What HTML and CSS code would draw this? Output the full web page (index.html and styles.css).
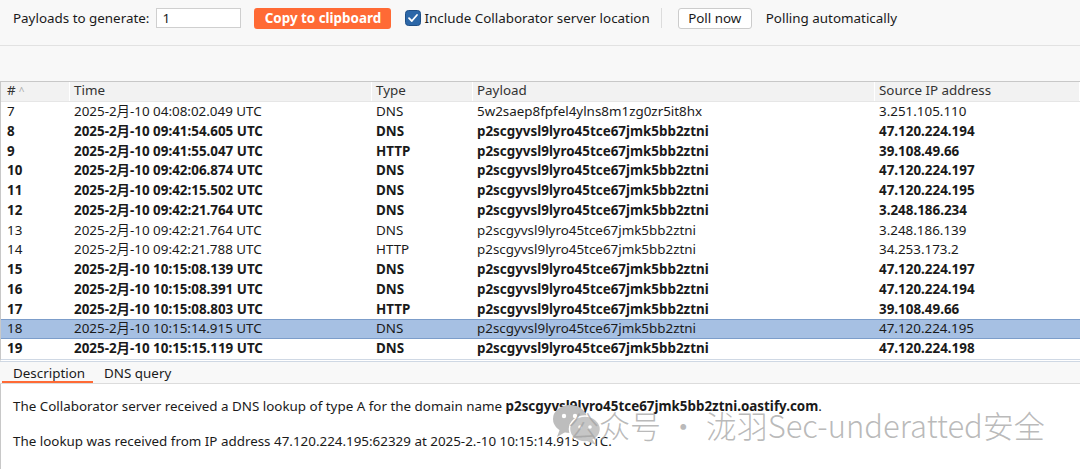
FILE: index.html
```html
<!DOCTYPE html>
<html>
<head>
<meta charset="utf-8">
<link rel="stylesheet" href="styles.css">
</head>
<body>
<div class="app">
  <div class="toolbar">
    <span class="label">Payloads to generate:</span>
    <span class="input">1</span>
    <span class="btn-primary">Copy to clipboard</span>
    <span class="check"><svg width="16" height="16" viewBox="0 0 16 16"><rect x="0.5" y="0.5" width="15" height="15" rx="3" fill="#2c67a8" stroke="#1f4f86"/><path d="M4 8.2 L6.8 11 L12 5" fill="none" stroke="#fff" stroke-width="1.8" stroke-linecap="round" stroke-linejoin="round"/></svg></span>
    <span class="check-label">Include Collaborator server location</span>
    <span class="sep"></span>
    <span class="btn">Poll now</span>
    <span class="status">Polling automatically</span>
  </div>
  <div class="spacer"></div>
  <div class="table">
    <div class="row head">
      <div class="c c1">#<span class="sort">^</span></div>
      <div class="c c2">Time</div>
      <div class="c c3">Type</div>
      <div class="c c4">Payload</div>
      <div class="c c5">Source IP address</div>
    </div>
    <div class="row"><div class="c c1">7</div><div class="c c2">2025-2月-10 04:08:02.049 UTC</div><div class="c c3">DNS</div><div class="c c4">5w2saep8fpfel4ylns8m1zg0zr5it8hx</div><div class="c c5">3.251.105.110</div></div>
    <div class="row b"><div class="c c1">8</div><div class="c c2">2025-2月-10 09:41:54.605 UTC</div><div class="c c3">DNS</div><div class="c c4">p2scgyvsl9lyro45tce67jmk5bb2ztni</div><div class="c c5">47.120.224.194</div></div>
    <div class="row b"><div class="c c1">9</div><div class="c c2">2025-2月-10 09:41:55.047 UTC</div><div class="c c3">HTTP</div><div class="c c4">p2scgyvsl9lyro45tce67jmk5bb2ztni</div><div class="c c5">39.108.49.66</div></div>
    <div class="row b"><div class="c c1">10</div><div class="c c2">2025-2月-10 09:42:06.874 UTC</div><div class="c c3">DNS</div><div class="c c4">p2scgyvsl9lyro45tce67jmk5bb2ztni</div><div class="c c5">47.120.224.197</div></div>
    <div class="row b"><div class="c c1">11</div><div class="c c2">2025-2月-10 09:42:15.502 UTC</div><div class="c c3">DNS</div><div class="c c4">p2scgyvsl9lyro45tce67jmk5bb2ztni</div><div class="c c5">47.120.224.195</div></div>
    <div class="row b"><div class="c c1">12</div><div class="c c2">2025-2月-10 09:42:21.764 UTC</div><div class="c c3">DNS</div><div class="c c4">p2scgyvsl9lyro45tce67jmk5bb2ztni</div><div class="c c5">3.248.186.234</div></div>
    <div class="row"><div class="c c1">13</div><div class="c c2">2025-2月-10 09:42:21.764 UTC</div><div class="c c3">DNS</div><div class="c c4">p2scgyvsl9lyro45tce67jmk5bb2ztni</div><div class="c c5">3.248.186.139</div></div>
    <div class="row"><div class="c c1">14</div><div class="c c2">2025-2月-10 09:42:21.788 UTC</div><div class="c c3">HTTP</div><div class="c c4">p2scgyvsl9lyro45tce67jmk5bb2ztni</div><div class="c c5">34.253.173.2</div></div>
    <div class="row b"><div class="c c1">15</div><div class="c c2">2025-2月-10 10:15:08.139 UTC</div><div class="c c3">DNS</div><div class="c c4">p2scgyvsl9lyro45tce67jmk5bb2ztni</div><div class="c c5">47.120.224.197</div></div>
    <div class="row b"><div class="c c1">16</div><div class="c c2">2025-2月-10 10:15:08.391 UTC</div><div class="c c3">DNS</div><div class="c c4">p2scgyvsl9lyro45tce67jmk5bb2ztni</div><div class="c c5">47.120.224.194</div></div>
    <div class="row b"><div class="c c1">17</div><div class="c c2">2025-2月-10 10:15:08.803 UTC</div><div class="c c3">HTTP</div><div class="c c4">p2scgyvsl9lyro45tce67jmk5bb2ztni</div><div class="c c5">39.108.49.66</div></div>
    <div class="row sel"><div class="c c1">18</div><div class="c c2">2025-2月-10 10:15:14.915 UTC</div><div class="c c3">DNS</div><div class="c c4">p2scgyvsl9lyro45tce67jmk5bb2ztni</div><div class="c c5">47.120.224.195</div></div>
    <div class="row b"><div class="c c1">19</div><div class="c c2">2025-2月-10 10:15:15.119 UTC</div><div class="c c3">DNS</div><div class="c c4">p2scgyvsl9lyro45tce67jmk5bb2ztni</div><div class="c c5">47.120.224.198</div></div>
  </div>
  <div class="tabs">
    <span class="tab active">Description</span>
    <span class="tab">DNS query</span>
  </div>
  <div class="content">
    <p>The Collaborator server received a DNS lookup of type A for the domain name <b>p2scgyvsl9lyro45tce67jmk5bb2ztni.oastify.com</b>.</p>
    <p>The lookup was received from IP address 47.120.224.195:62329 at 2025-2.-10 10:15:14.915 UTC.</p>
  </div>
  <div class="watermark">
    <svg class="wm-icon" width="50" height="42" viewBox="0 0 50 42"><ellipse cx="18" cy="15" rx="17" ry="14" fill="#bdbdbd"/><path d="M8 25 L5 33 L15 27 Z" fill="#bdbdbd"/><ellipse cx="33" cy="25" rx="15.5" ry="13" fill="#c6c6c6" stroke="#fff" stroke-width="1.5"/><path d="M40 35 L44 41 L35 37 Z" fill="#c6c6c6"/><circle cx="12" cy="12" r="2.2" fill="#fff"/><circle cx="23" cy="12" r="2.2" fill="#fff"/><circle cx="28" cy="23" r="1.8" fill="#fff"/><circle cx="38" cy="23" r="1.8" fill="#fff"/></svg>
    <span class="wm-text">公众号 · 泷羽Sec-underatted安全</span>
  </div>
</div>
</body>
</html>
```
FILE: styles.css
```css
html, body {
  margin: 0;
  padding: 0;
}
body {
  width: 1080px;
  height: 469px;
  overflow: hidden;
  background: #f8f8f8;
  font-family: "Noto Sans", "Noto Sans CJK SC", sans-serif;
  font-size: 13.4px;
  color: #1a1a1a;
}
.app {
  position: relative;
  width: 1080px;
  height: 469px;
}
.toolbar {
  height: 46px;
  box-sizing: border-box;
  border-bottom: 1px solid #e2e2e2;
  display: flex;
  align-items: center;
  padding: 0 0 9px 13px;
}
.label { margin-right: 7px; }
.input {
  width: 85px;
  height: 20px;
  box-sizing: border-box;
  background: #fff;
  border: 1px solid #cfcfcf;
  padding-left: 5px;
  line-height: 18px;
  margin-right: 13px;
}
.btn-primary {
  width: 137px;
  height: 21px;
  box-sizing: border-box;
  background: #ff6a35;
  color: #fff;
  font-weight: bold;
  border-radius: 3px;
  text-align: center;
  line-height: 21px;
  margin-right: 14px;
}
.check { display: flex; margin-right: 3px; }
.check-label { margin-right: 11px; }
.sep {
  width: 1px;
  height: 20px;
  background: #dcdcdc;
  margin-right: 16px;
}
.btn {
  width: 74px;
  height: 21px;
  box-sizing: border-box;
  background: #fff;
  border: 1px solid #cccccc;
  border-radius: 3px;
  text-align: center;
  line-height: 19px;
  margin-right: 14px;
}
.spacer { height: 35px; }
.table {
  border-top: 1px solid #c8c8c8;
  border-left: 1px solid #c8c8c8;
  background: #fff;
  border-bottom: 3px double #cfd8e4;
}
.row {
  display: flex;
  height: 19.75px;
  line-height: 19.75px;
  white-space: nowrap;
}
.row.head {
  height: 19px;
  line-height: 17px;
  background: #f2f2f2;
  color: #333;
  border-bottom: 1px solid #e6e6e6;
}
.row.head .c { border-right: 1px solid #fff; }
.row.b { font-weight: bold; }
.row.sel {
  background: #a6c0e3;
  box-shadow: inset 0 1px 0 #7c9dca, inset 0 -1px 0 #7c9dca;
}
.c { box-sizing: border-box; padding-left: 4px; overflow: hidden; }
.c1 { width: 69px; padding-left: 6px; }
.c2 { width: 302px; }
.c3 { width: 101px; }
.c4 { width: 402px; }
.c5 { flex: 1; }
.sort { color: #aaa; font-size: 10px; margin-left: 3px; }
.tabs {
  display: flex;
  height: 22px;
  box-sizing: border-box;
  padding-top: 2px;
  border-bottom: 1px solid #dcdcdc;
  padding-left: 2px;
}
.tab {
  padding: 0 8px 0 11px;
  line-height: 18px;
  border-bottom: 2px solid transparent;
}
.tab.active { border-bottom-color: #ff6a35; }
.content {
  background: #fff;
  border-left: 1px solid #c8c8c8;
  height: 90px;
  padding: 13px 12px 0;
}
.content p { margin: 0 0 16px; line-height: 19px; }
.watermark {
  position: absolute;
  left: 552px;
  top: 402px;
  display: flex;
  align-items: center;
  color: rgba(160, 160, 160, 0.72);
  font-family: "Noto Sans CJK SC", "Noto Sans", sans-serif;
  font-weight: 300;
  font-size: 31px;
  white-space: nowrap;
}
.wm-icon { margin-right: -34px; }
```
